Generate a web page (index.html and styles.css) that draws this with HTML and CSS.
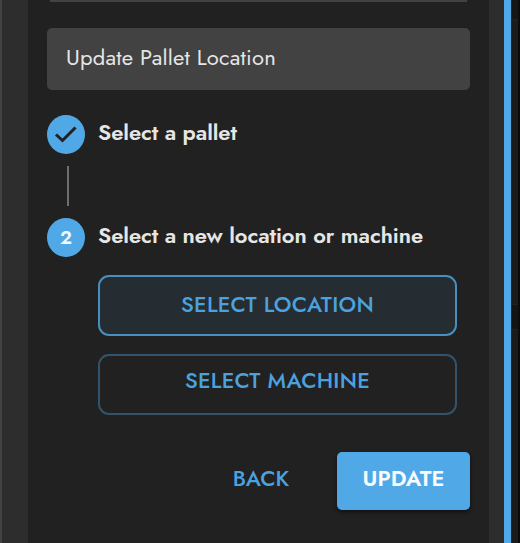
FILE: index.html
```
<!DOCTYPE html>
<html lang="en">
<head>
<meta charset="utf-8">
<title>Update Pallet Location</title>
<link rel="stylesheet" href="styles.css">
</head>
<body>
<div class="drawer">
  <main class="panel">
    <div class="previous-card"></div>
    <h1 class="title-card">Update Pallet Location</h1>
    <section class="step">
      <span class="marker"><svg class="check" viewBox="0 0 24 20"><path d="M2 9.5 8.5 15.5 21.5 2.5"/></svg></span>
      <h2 class="step-label">Select a pallet</h2>
    </section>
    <div class="connector"></div>
    <section class="step">
      <span class="marker">2</span>
      <h2 class="step-label">Select a new location or machine</h2>
    </section>
    <div class="choices">
      <button class="choice selected">SELECT LOCATION</button>
      <button class="choice">SELECT MACHINE</button>
    </div>
    <footer class="actions">
      <button class="back">BACK</button>
      <button class="update">UPDATE</button>
    </footer>
  </main>
</div>
<aside class="backdrop"><i class="backdrop-top"></i><i class="backdrop-gap"></i></aside>
</body>
</html>
```
FILE: styles.css
```
* { box-sizing: border-box; }
body {
  margin: 0;
  display: flex;
  width: 520px;
  height: 543px;
  overflow: hidden;
  background: #1b1b1b;
  color: #e6e6e6;
  font-family: Jost, Lato, sans-serif;
}
h1, h2 { margin: 0; font-weight: 400; white-space: nowrap; }
button { margin: 0; padding: 0; border: 0; background: none; color: #4ba2df; font: inherit; white-space: nowrap; }
.drawer {
  width: 511px;
  height: 543px;
  padding: 0 15px 0 26px;
  border-left: 2px solid #424242;
  border-right: 7px solid #50a9e6;
  background: #2d2d2d;
}
.panel {
  width: 461px;
  height: 543px;
  padding: 0 19px;
  background: #212121;
}
.previous-card { height: 2px; margin: 0 3px; background: #424242; }
.title-card {
  display: flex;
  align-items: center;
  height: 62px;
  margin: 26px 0 25px;
  padding: 0 19px 4px;
  border-radius: 5px;
  background: #424242;
  font-size: 22px;
  font-weight: 450;
  letter-spacing: 0.2px;
}
.step { display: flex; align-items: center; height: 39px; gap: 13px; }
.marker {
  display: flex;
  flex: none;
  align-items: center;
  justify-content: center;
  width: 38px;
  height: 39px;
  border-radius: 50%;
  background: #50a9e6;
  color: #f2f8fc;
  font-size: 19px;
  font-weight: 600;
}
.check { width: 24px; height: 20px; fill: none; stroke: #212121; stroke-width: 3; }
.step-label { padding-bottom: 5px; font-size: 22px; font-weight: 600; letter-spacing: -0.07px; }
.connector { width: 2px; height: 40px; margin: 12px 0 12px 20px; background: #6e6e6e; }
.choices { display: flex; flex-direction: column; gap: 18px; margin: 18px 13px 0 51px; }
.choice {
  height: 61px;
  padding-bottom: 10px;
  border: 2px solid #31536b;
  border-radius: 11px;
  font-size: 22px;
  font-weight: 500;
  letter-spacing: 0.27px;
}
.choice.selected { padding-bottom: 4px; border-color: #468fc1; background: #252c32; }
.actions { display: flex; justify-content: flex-end; gap: 48px; height: 58px; margin-top: 37px; font-size: 22px; font-weight: 500; }
.back { padding-bottom: 6px; }
.update {
  width: 133px;
  padding-bottom: 6px;
  border-radius: 5px;
  background: #50a9e6;
  box-shadow: 0 2px 4px #0008;
  color: #f7fbfe;
  font-weight: 600;
}
.backdrop { display: flex; flex-direction: column; width: 9px; height: 543px; background: #1b1b1b; border-left: 1px solid #232323; border-right: 2px solid #0c0c0c; }
.backdrop-top { height: 21px; border-bottom: 2px solid #202020; background: #161616; }
.backdrop-gap { height: 26px; margin-top: 283px; border: solid #202020; border-width: 1px 0; background: #141414; }
```
